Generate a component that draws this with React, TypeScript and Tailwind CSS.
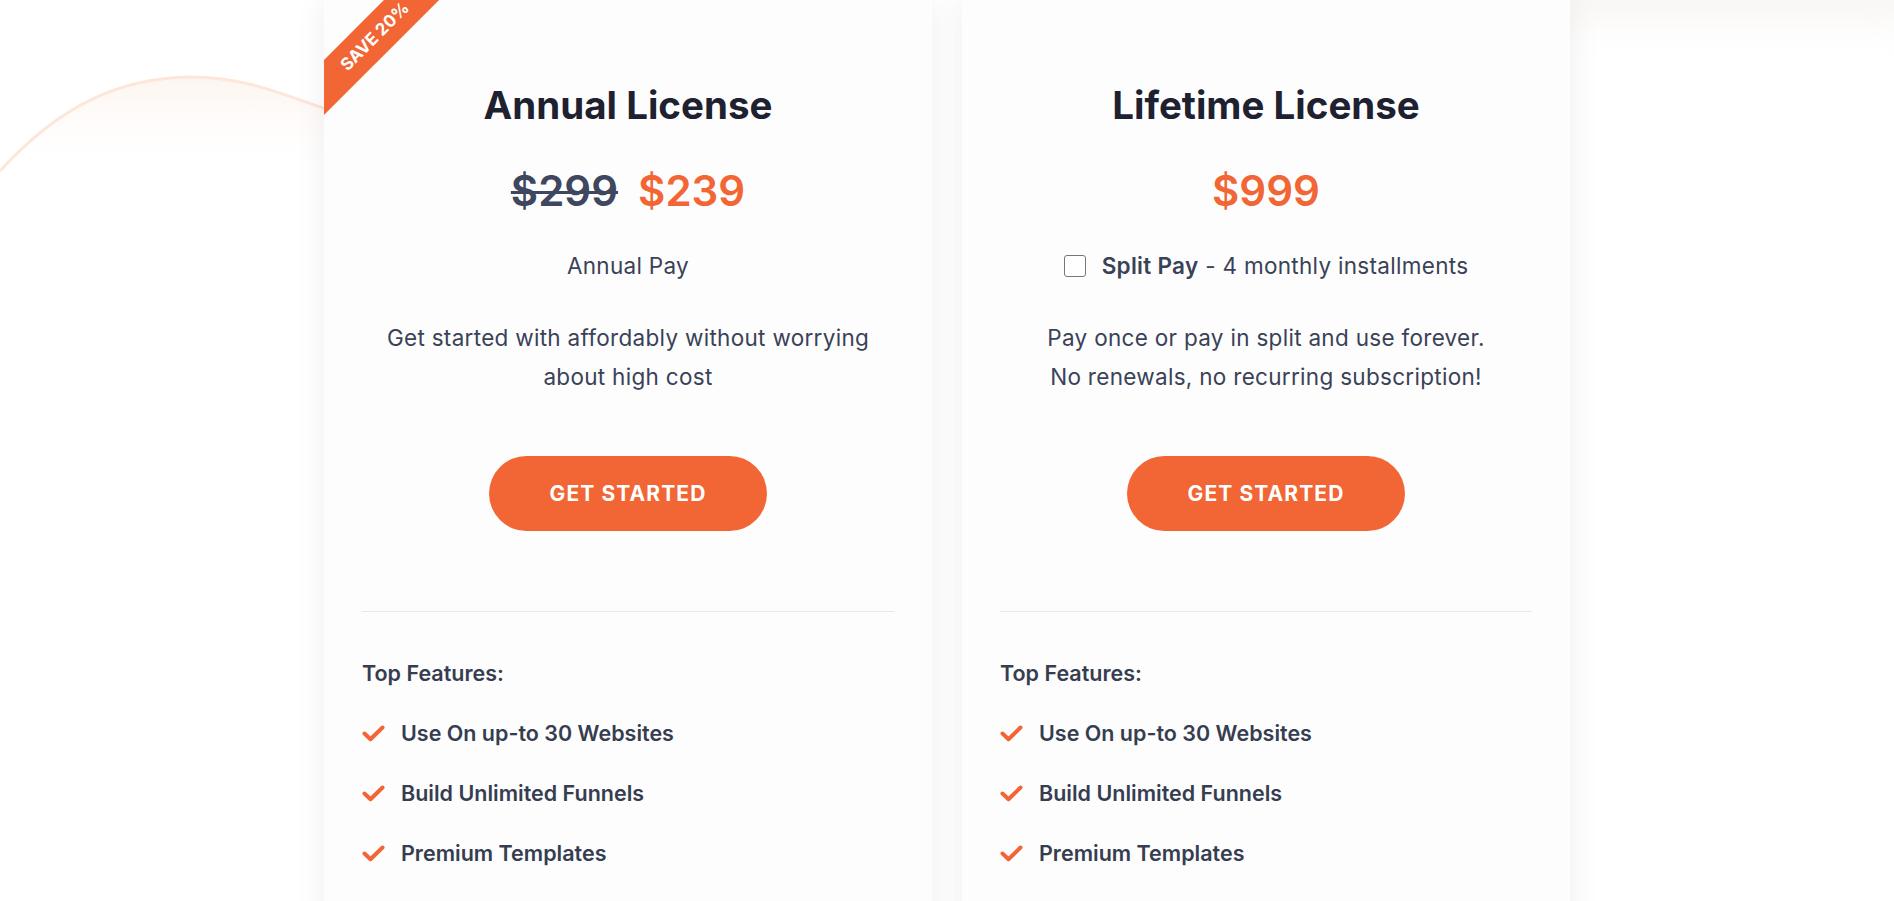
const features = ['Use On up-to 30 Websites', 'Build Unlimited Funnels', 'Premium Templates'];

function CheckMark() {
  return (
    <svg width="23" height="17" viewBox="0 0 23 17" className="shrink-0">
      <path d="M2.5 8.5 L8.5 14.2 L20.5 2.5" fill="none" stroke="#f26535" strokeWidth="4" strokeLinecap="round" strokeLinejoin="round" />
    </svg>
  );
}

function FeatureList() {
  return (
    <div className="mt-[46px] text-left">
      <h4 className="text-[21.5px] leading-[30px] font-semibold text-[#363d50]">Top Features:</h4>
      <ul className="mt-[30px] flex flex-col gap-[30px]">
        {features.map((f) => (
          <li key={f} className="flex items-center gap-[16px] text-[21.5px] leading-[30px] font-semibold text-[#363d50]">
            <CheckMark />
            <span>{f}</span>
          </li>
        ))}
      </ul>
    </div>
  );
}

function GetStarted() {
  return (
    <button className="mx-auto mt-[60px] flex h-[75px] w-[278px] items-center justify-center rounded-full bg-[#f26535] text-[21px] font-bold tracking-[1.1px] text-white">
      GET STARTED
    </button>
  );
}

export default function App() {
  return (
    <div className="relative h-[901px] overflow-hidden bg-white font-['Inter',sans-serif]">
      {/* faint wave top-left */}
      <svg className="pointer-events-none absolute left-0 top-0" width="340" height="200" viewBox="0 0 340 200">
        <defs>
          <linearGradient id="wf" x1="0" y1="0" x2="0" y2="1">
            <stop offset="0" stopColor="#fdf0e8" stopOpacity="0.7" />
            <stop offset="1" stopColor="#ffffff" stopOpacity="0" />
          </linearGradient>
        </defs>
        <path d="M0 171 C 60 105, 120 78, 190 77 C 250 77, 290 98, 330 110 L 330 175 L 0 175 Z" fill="url(#wf)" />
        <path d="M0 171 C 60 105, 120 78, 190 77 C 250 77, 290 98, 330 110" fill="none" stroke="#fde6da" strokeWidth="3" />
      </svg>
      {/* faint shape top-right */}
      <div className="pointer-events-none absolute right-[-60px] top-[-80px] h-[100px] w-[480px] rounded-full bg-[#f8f6f4] blur-[20px]" />

      <div className="relative flex justify-center gap-[30px]">
        {/* Annual */}
        <div className="relative w-[608px] overflow-hidden bg-[#fdfdfd] px-[38px] pt-[82px] pb-[120px] text-center shadow-[0_0_30px_rgba(0,0,0,0.07)]">
          <div className="absolute left-[-49px] top-[17px] flex h-[39px] w-[200px] -rotate-45 items-center justify-center bg-[#f26535] text-[17px] font-bold text-white">
            SAVE 20%
          </div>
          <h2 className="text-[38.5px] leading-[46px] font-bold text-[#1e2130]">Annual License</h2>
          <div className="mt-[39px] flex items-center justify-center gap-[20px] text-[42px] leading-[48px] font-semibold">
            <span className="text-[#3f4760] line-through decoration-[3px]">$299</span>
            <span className="text-[#f26535]">$239</span>
          </div>
          <p className="mt-[36px] text-[22.5px] leading-[30px] tracking-[0.3px] text-[#3a4257]">Annual Pay</p>
          <p className="mt-[37px] text-[22.5px] leading-[39px] tracking-[0.3px] text-[#3a4257]">
            Get started with affordably without worrying
            <br />
            about high cost
          </p>
          <GetStarted />
          <div className="mt-[80px] h-px bg-[#e7e8ee]" />
          <FeatureList />
        </div>

        {/* Lifetime */}
        <div className="relative w-[608px] overflow-hidden bg-[#fdfdfd] px-[38px] pt-[82px] pb-[120px] text-center shadow-[0_0_30px_rgba(0,0,0,0.07)]">
          <h2 className="text-[38.5px] leading-[46px] font-bold text-[#1e2130]">Lifetime License</h2>
          <div className="mt-[39px] text-[42px] leading-[48px] font-semibold text-[#f26535]">$999</div>
          <label className="mt-[36px] flex items-center justify-center gap-[16px] text-[22.5px] leading-[30px] tracking-[0.3px] text-[#3a4257]">
            <span className="h-[22px] w-[22px] shrink-0 rounded-[3px] border-[1.5px] border-[#76777c] bg-white" />
            <span>
              <b className="font-semibold">Split Pay</b> - 4 monthly installments
            </span>
          </label>
          <p className="mt-[37px] text-[22.5px] leading-[39px] tracking-[0.3px] text-[#3a4257]">
            Pay once or pay in split and use forever.
            <br />
            No renewals, no recurring subscription!
          </p>
          <GetStarted />
          <div className="mt-[80px] h-px bg-[#e7e8ee]" />
          <FeatureList />
        </div>
      </div>
    </div>
  );
}
